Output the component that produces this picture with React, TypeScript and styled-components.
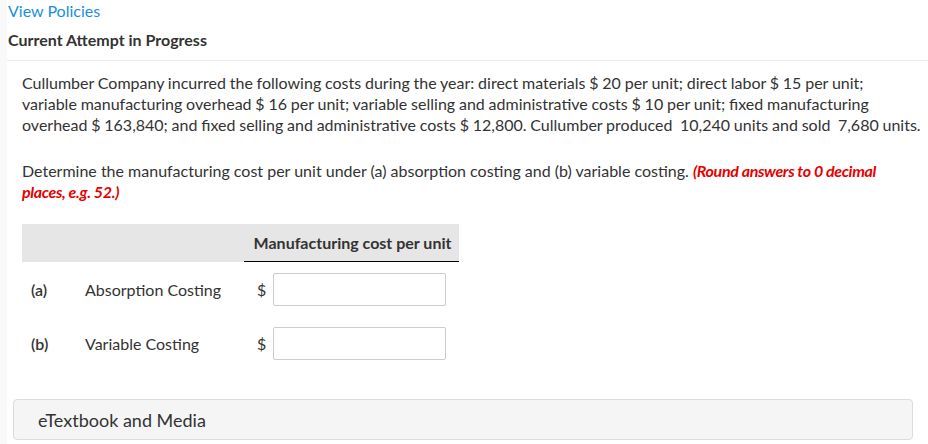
import React from "react";
import styled, { createGlobalStyle } from "styled-components";

const Global = createGlobalStyle`
  html, body { margin: 0; padding: 0; background: #fff; }
  body { font-family: Lato, "Open Sans", sans-serif; color: #333; }
  * { box-sizing: border-box; }
`;

const Shell = styled.div`
  display: flex;
  min-height: 444px;
  background: #f9f9f9;
`;

const Page = styled.div`
  flex: 1;
  margin-left: 7px;
  background: #fff;
  min-height: 444px;
`;

const TopBar = styled.div`
  padding: 1px 0 0 1px;
  border-bottom: 1px solid #ebebeb;
  height: 61px;
`;

const PolicyLink = styled.a`
  display: block;
  color: #1a8fdd;
  font-size: 16px;
  line-height: 20px;
  text-decoration: none;
`;

const AttemptTitle = styled.div`
  margin-top: 9px;
  font-size: 16px;
  line-height: 20px;
  font-weight: 700;
  color: #333;
`;

const Question = styled.div`
  padding: 11px 0 0 15px;
`;

const Para = styled.p<{ $gap?: number; $tight?: boolean }>`
  margin: 0 0 ${(p) => p.$gap ?? 25}px 0;
  font-size: 16px;
  line-height: 21px;
  color: #333;
  white-space: nowrap;
  word-spacing: ${(p) => (p.$tight ? "-0.3px" : "0")};
`;

const Hint = styled.span`
  color: #e60000;
  font-weight: 700;
  font-style: italic;
  letter-spacing: -0.35px;
`;

const Table = styled.div`
  width: 437px;
`;

const HeaderRow = styled.div`
  display: grid;
  grid-template-columns: 222px 1fr;
  background: #e6e6e6;
  height: 38px;
`;

const HeaderCell = styled.div`
  grid-column: 2;
  display: flex;
  align-items: center;
  justify-content: center;
  font-size: 16px;
  font-weight: 700;
  color: #333;
  border-bottom: 1px solid #000;
  padding: 0 0 1px 2px;
`;

const Row = styled.div`
  display: grid;
  grid-template-columns: 63px 172px 16px 173px;
  align-items: center;
  height: 54px;
`;

const Label = styled.div<{ $pad?: number; $strong?: boolean }>`
  font-size: 16px;
  color: #333;
  font-weight: ${(p) => (p.$strong ? 600 : 400)};
  padding-left: ${(p) => p.$pad ?? 0}px;
`;

const Dollar = styled.div`
  font-size: 16px;
  color: #333;
`;

const Input = styled.input`
  width: 173px;
  height: 33px;
  border: 1px solid #ccc;
  border-radius: 2px;
  background: #fff;
  font-size: 16px;
  font-family: Lato, sans-serif;
`;

const Media = styled.div`
  margin: 29px 15px 0 6px;
  height: 41px;
  background: #f5f5f5;
  border: 1px solid #dcdcdc;
  border-radius: 4px;
  display: flex;
  align-items: center;
  padding-left: 24px;
  font-size: 18px;
  color: #333;
`;

export default function App() {
  return (
    <>
      <Global />
      <Shell>
        <Page>
          <TopBar>
            <PolicyLink href="#">View Policies</PolicyLink>
            <AttemptTitle>Current Attempt in Progress</AttemptTitle>
          </TopBar>
          <Question>
            <Para $tight>
              Cullumber Company incurred the following costs during the year: direct materials $ 20 per unit; direct labor $ 15 per unit;
              <br />
              variable manufacturing overhead $ 16 per unit; variable selling and administrative costs $ 10 per unit; fixed manufacturing
              <br />
              overhead $ 163,840; and fixed selling and administrative costs $ 12,800. Cullumber produced&nbsp; 10,240 units and sold&nbsp; 7,680 units.
            </Para>
            <Para $gap={22}>
              Determine the manufacturing cost per unit under (a) absorption costing and (b) variable costing.{" "}
              <Hint>
                (Round answers to 0 decimal
                <br />
                places, e.g. 52.)
              </Hint>
            </Para>
            <Table>
              <HeaderRow>
                <HeaderCell>Manufacturing cost per unit</HeaderCell>
              </HeaderRow>
              <Row>
                <Label $pad={9} $strong>(a)</Label>
                <Label>Absorption Costing</Label>
                <Dollar>$</Dollar>
                <Input />
              </Row>
              <Row>
                <Label $pad={9} $strong>(b)</Label>
                <Label>Variable Costing</Label>
                <Dollar>$</Dollar>
                <Input />
              </Row>
            </Table>
          </Question>
          <Media>eTextbook and Media</Media>
        </Page>
      </Shell>
    </>
  );
}
